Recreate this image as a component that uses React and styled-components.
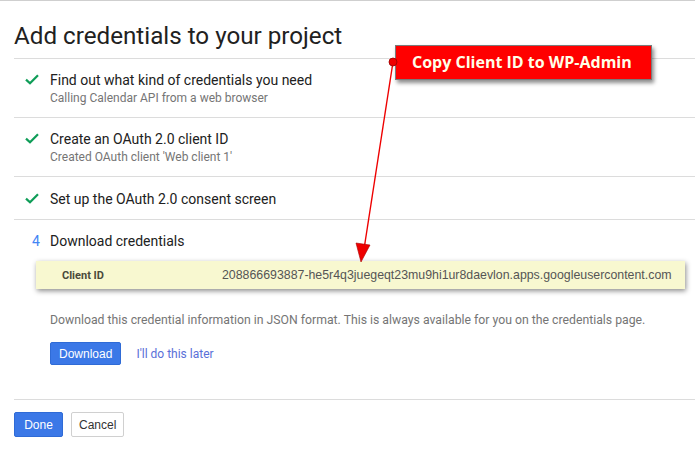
import styled, { createGlobalStyle } from "styled-components";

const GlobalStyle = createGlobalStyle`
  html, body {
    margin: 0;
    padding: 0;
    background: #fff;
  }
  body {
    font-family: Roboto, "Liberation Sans", Arial, sans-serif;
    color: #212121;
    border-top: 1px solid #cfcfcf;
  }
`;

const steps = [
  {
    done: true,
    title: "Find out what kind of credentials you need",
    sub: "Calling Calendar API from a web browser",
  },
  {
    done: true,
    title: "Create an OAuth 2.0 client ID",
    sub: "Created OAuth client 'Web client 1'",
  },
  { done: true, title: "Set up the OAuth 2.0 consent screen" },
];

const Check = () => (
  <svg width="14" height="11" viewBox="0 0 14 11">
    <path d="M1 5.6 L5 9.3 L13 1.2" fill="none" stroke="#0f9d58" strokeWidth="2.2" />
  </svg>
);

const App = () => {
  return (
    <>
      <GlobalStyle />
      <Page>
        <Title>Add credentials to your project</Title>
        {steps.map((s) => (
          <Step key={s.title} $short={!s.sub}>
            <Marker>
              <Check />
            </Marker>
            <div>
              <StepTitle>{s.title}</StepTitle>
              {s.sub && <StepSub>{s.sub}</StepSub>}
            </div>
          </Step>
        ))}
        <Step $last>
          <Marker $num>4</Marker>
          <div>
            <StepTitle>Download credentials</StepTitle>
          </div>
        </Step>
        <Highlight>
          <Label>Client ID</Label>
          <Value>208866693887-he5r4q3juegeqt23mu9hi1ur8daevlon.apps.googleusercontent.com</Value>
        </Highlight>
        <Body>
          <Desc>
            Download this credential information in JSON format. This is always
            available for you on the credentials page.
          </Desc>
          <Actions>
            <Button $primary $small>Download</Button>
            <LinkText>I'll do this later</LinkText>
          </Actions>
        </Body>
        <Footer>
          <Button $primary>Done</Button>
          <Button>Cancel</Button>
        </Footer>
      </Page>

      <Callout>Copy Client ID to WP-Admin</Callout>
      <Arrow width="695" height="463" viewBox="0 0 695 463">
        <line x1="393" y1="62" x2="364.5" y2="246" stroke="#e00" strokeWidth="1.4" />
        <polygon points="356,243 370,245 361,262" fill="#ee0000" stroke="#a00" strokeWidth="0.6" />
        <circle cx="393" cy="62" r="4" fill="#e00" stroke="#900" strokeWidth="0.8" />
      </Arrow>
    </>
  );
};
export default App;

const Page = styled.div`
  padding-left: 14px;
  display: flex;
  flex-direction: column;
`;
const Title = styled.h1`
  margin: 0;
  padding: 20px 0 0;
  height: 37px;
  font-size: 24.2px;
  font-weight: 400;
  line-height: 30px;
  color: #212121;
  border-bottom: 1px solid #dcdcdc;
`;
const Step = styled.div`
  display: flex;
  padding: ${(p) => (p.$short ? "12px" : "11px")} 0
    ${(p) => (p.$last ? "9px" : p.$short ? "10px" : "11px")};
  border-bottom: ${(p) => (p.$last ? "none" : "1px solid #dcdcdc")};
  min-height: 20px;
`;
const Marker = styled.div`
  width: 36px;
  flex: none;
  display: flex;
  justify-content: ${(p) => (p.$num ? "flex-start" : "center")};
  padding-left: ${(p) => (p.$num ? "18px" : "0")};
  box-sizing: border-box;
  padding-top: ${(p) => (p.$num ? "0" : "4px")};
  font-size: 14px;
  line-height: 20px;
  color: #4285f4;
`;
const StepTitle = styled.div`
  font-size: 14px;
  line-height: 20px;
  color: #212121;
`;
const StepSub = styled.div`
  font-size: 12px;
  line-height: 16px;
  color: #757575;
`;
const Highlight = styled.div`
  margin: 1px 10px 0 22px;
  height: 28px;
  display: flex;
  align-items: center;
  background: #f8f8d0;
  box-shadow: 1px 2px 5px rgba(0, 0, 0, 0.45);
  padding-left: 26px;
`;
const Label = styled.div`
  width: 160px;
  flex: none;
  font-size: 11px;
  font-weight: 700;
  color: #4a4a3a;
`;
const Value = styled.div`
  font-family: "Liberation Sans", Arial, sans-serif;
  font-size: 12.35px;
  color: #555;
`;
const Body = styled.div`
  padding: 23px 0 0 36px;
`;
const Desc = styled.div`
  font-size: 12.25px;
  line-height: 16px;
  color: #757575;
`;
const Actions = styled.div`
  display: flex;
  align-items: center;
  gap: 15px;
  margin-top: 14px;
  padding-bottom: 34px;
  border-bottom: 1px solid #dcdcdc;
  margin-left: -36px;
  padding-left: 36px;
`;
const Button = styled.button`
  font-family: "Liberation Sans", Arial, sans-serif;
  font-size: 12px;
  height: ${(p) => (p.$small ? "23px" : "25px")};
  min-width: 49px;
  padding: 0 ${(p) => (p.$small ? "8px" : "7px")};
  border-radius: 2px;
  border: 1px solid ${(p) => (p.$primary ? "#2f6bd6" : "#d0d0d0")};
  background: ${(p) => (p.$primary ? "#3b78e7" : "#fff")};
  color: ${(p) => (p.$primary ? "#fff" : "#333")};
  cursor: pointer;
`;
const LinkText = styled.span`
  font-size: 12px;
  color: #5a70d8;
`;
const Footer = styled.div`
  display: flex;
  align-items: center;
  gap: 8px;
  padding-top: 12px;
`;
const Callout = styled.div`
  position: absolute;
  left: 395px;
  top: 45px;
  width: 257px;
  height: 35px;
  box-sizing: border-box;
  background: #ff0000;
  border: 1px solid #7a7a7a;
  box-shadow: 2px 3px 4px rgba(0, 0, 0, 0.45);
  color: #ffffe8;
  font-family: "Open Sans", Lato, sans-serif;
  font-weight: 700;
  font-size: 16px;
  line-height: 33px;
  padding-left: 16px;
`;
const Arrow = styled.svg`
  position: absolute;
  left: 0;
  top: 0;
  pointer-events: none;
`;
